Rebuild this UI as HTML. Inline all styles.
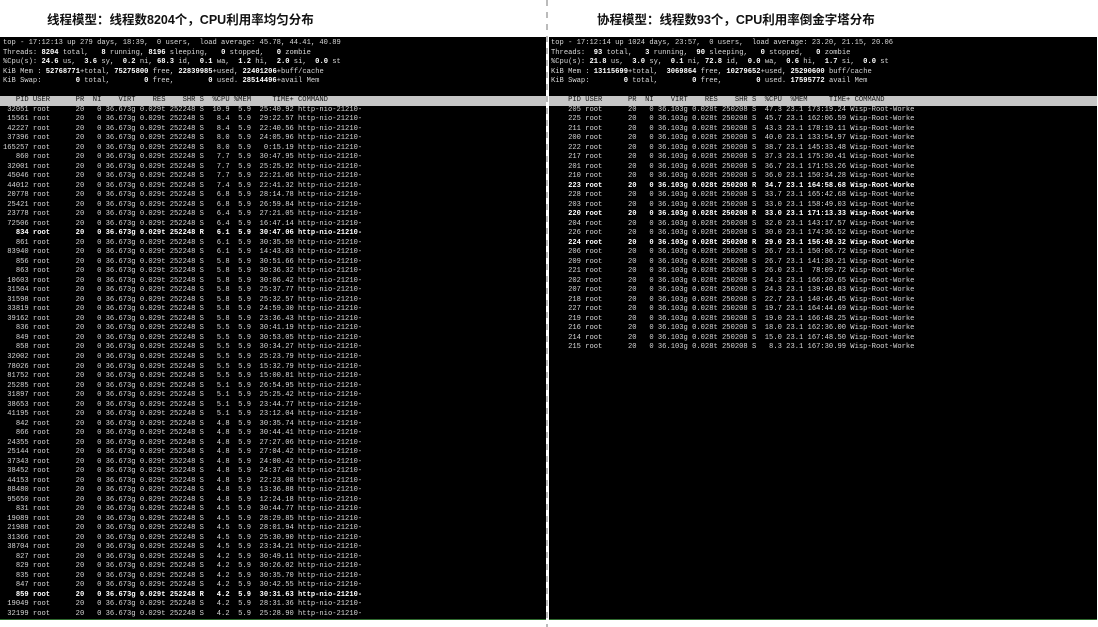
<!DOCTYPE html>
<html><head><meta charset="utf-8"><style>
html,body{margin:0;padding:0;background:#fff;width:1098px;height:627px;overflow:hidden;position:relative}
.t{position:absolute;top:9px;font:bold 12.5px "Liberation Sans","Noto Sans CJK SC",sans-serif;color:#111;white-space:nowrap}
.p{position:absolute;top:37px;height:582px;background:#000;border-bottom:1px solid #2f6b2f}
pre{position:absolute;top:2px;margin:0;font-family:"Liberation Mono",monospace;font-size:7.13px;line-height:9.52px;color:#d8d8d8;white-space:pre}
b{color:#fff;font-weight:bold}
.h{display:block;height:9.5px;background:#c6c6c6;color:#111;margin-left:-3px;padding-left:3px;width:560px}
.dash{position:absolute;left:546px;top:0;width:2px;height:627px;background:repeating-linear-gradient(#bbb 0 6px,transparent 6px 12px)}
</style></head><body>
<div class="t" style="left:47px">线程模型：线程数8204个，CPU利用率均匀分布</div>
<div class="t" style="left:597px">协程模型：线程数93个，CPU利用率倒金字塔分布</div>
<div class="p" style="left:0;width:546px;overflow:hidden"><pre style="left:3px">top - 17:12:13 up 279 days, 18:39,  0 users,  load average: 45.78, 44.41, 40.89
Threads: <b>8204</b> total,   <b>8</b> running, <b>8196</b> sleeping,   <b>0</b> stopped,   <b>0</b> zombie
%Cpu(s): <b>24.6</b> us,  <b>3.6</b> sy,  <b>0.2</b> ni, <b>68.3</b> id,  <b>0.1</b> wa,  <b>1.2</b> hi,  <b>2.0</b> si,  <b>0.0</b> st
KiB Mem : <b>52768771</b>+total, <b>75275800</b> free, <b>22839985</b>+used, <b>22401206</b>+buff/cache
KiB Swap:        <b>0</b> total,        <b>0</b> free,        <b>0</b> used. <b>28514496</b>+avail Mem

<span class="h">   PID USER      PR  NI    VIRT    RES    SHR S  %CPU %MEM     TIME+ COMMAND</span> 32051 root      20   0 36.673g 0.029t 252248 S  10.9  5.9  25:40.92 http-nio-21210-
 15561 root      20   0 36.673g 0.029t 252248 S   8.4  5.9  29:22.57 http-nio-21210-
 42227 root      20   0 36.673g 0.029t 252248 S   8.4  5.9  22:40.56 http-nio-21210-
 37396 root      20   0 36.673g 0.029t 252248 S   8.0  5.9  24:05.96 http-nio-21210-
165257 root      20   0 36.673g 0.029t 252248 S   8.0  5.9   0:15.19 http-nio-21210-
   860 root      20   0 36.673g 0.029t 252248 S   7.7  5.9  30:47.95 http-nio-21210-
 32001 root      20   0 36.673g 0.029t 252248 S   7.7  5.9  25:25.92 http-nio-21210-
 45046 root      20   0 36.673g 0.029t 252248 S   7.7  5.9  22:21.06 http-nio-21210-
 44012 root      20   0 36.673g 0.029t 252248 S   7.4  5.9  22:41.32 http-nio-21210-
 20778 root      20   0 36.673g 0.029t 252248 S   6.8  5.9  28:14.78 http-nio-21210-
 25421 root      20   0 36.673g 0.029t 252248 S   6.8  5.9  26:59.84 http-nio-21210-
 23778 root      20   0 36.673g 0.029t 252248 S   6.4  5.9  27:21.05 http-nio-21210-
 72506 root      20   0 36.673g 0.029t 252248 S   6.4  5.9  16:47.14 http-nio-21210-
<b>   834 root      20   0 36.673g 0.029t 252248 R   6.1  5.9  30:47.06 http-nio-21210-</b>
   861 root      20   0 36.673g 0.029t 252248 S   6.1  5.9  30:35.50 http-nio-21210-
 83940 root      20   0 36.673g 0.029t 252248 S   6.1  5.9  14:43.03 http-nio-21210-
   856 root      20   0 36.673g 0.029t 252248 S   5.8  5.9  30:51.66 http-nio-21210-
   863 root      20   0 36.673g 0.029t 252248 S   5.8  5.9  30:36.32 http-nio-21210-
 10603 root      20   0 36.673g 0.029t 252248 S   5.8  5.9  30:06.42 http-nio-21210-
 31504 root      20   0 36.673g 0.029t 252248 S   5.8  5.9  25:37.77 http-nio-21210-
 31598 root      20   0 36.673g 0.029t 252248 S   5.8  5.9  25:32.57 http-nio-21210-
 33819 root      20   0 36.673g 0.029t 252248 S   5.8  5.9  24:59.30 http-nio-21210-
 39162 root      20   0 36.673g 0.029t 252248 S   5.8  5.9  23:36.43 http-nio-21210-
   836 root      20   0 36.673g 0.029t 252248 S   5.5  5.9  30:41.19 http-nio-21210-
   849 root      20   0 36.673g 0.029t 252248 S   5.5  5.9  30:53.05 http-nio-21210-
   858 root      20   0 36.673g 0.029t 252248 S   5.5  5.9  30:34.27 http-nio-21210-
 32002 root      20   0 36.673g 0.029t 252248 S   5.5  5.9  25:23.79 http-nio-21210-
 78026 root      20   0 36.673g 0.029t 252248 S   5.5  5.9  15:32.79 http-nio-21210-
 81752 root      20   0 36.673g 0.029t 252248 S   5.5  5.9  15:00.81 http-nio-21210-
 25285 root      20   0 36.673g 0.029t 252248 S   5.1  5.9  26:54.95 http-nio-21210-
 31897 root      20   0 36.673g 0.029t 252248 S   5.1  5.9  25:25.42 http-nio-21210-
 38653 root      20   0 36.673g 0.029t 252248 S   5.1  5.9  23:44.77 http-nio-21210-
 41195 root      20   0 36.673g 0.029t 252248 S   5.1  5.9  23:12.04 http-nio-21210-
   842 root      20   0 36.673g 0.029t 252248 S   4.8  5.9  30:35.74 http-nio-21210-
   866 root      20   0 36.673g 0.029t 252248 S   4.8  5.9  30:44.41 http-nio-21210-
 24355 root      20   0 36.673g 0.029t 252248 S   4.8  5.9  27:27.06 http-nio-21210-
 25144 root      20   0 36.673g 0.029t 252248 S   4.8  5.9  27:04.42 http-nio-21210-
 37343 root      20   0 36.673g 0.029t 252248 S   4.8  5.9  24:00.42 http-nio-21210-
 38452 root      20   0 36.673g 0.029t 252248 S   4.8  5.9  24:37.43 http-nio-21210-
 44153 root      20   0 36.673g 0.029t 252248 S   4.8  5.9  22:23.08 http-nio-21210-
 88480 root      20   0 36.673g 0.029t 252248 S   4.8  5.9  13:36.88 http-nio-21210-
 95650 root      20   0 36.673g 0.029t 252248 S   4.8  5.9  12:24.18 http-nio-21210-
   831 root      20   0 36.673g 0.029t 252248 S   4.5  5.9  30:44.77 http-nio-21210-
 19089 root      20   0 36.673g 0.029t 252248 S   4.5  5.9  28:29.85 http-nio-21210-
 21988 root      20   0 36.673g 0.029t 252248 S   4.5  5.9  28:01.94 http-nio-21210-
 31366 root      20   0 36.673g 0.029t 252248 S   4.5  5.9  25:30.90 http-nio-21210-
 38704 root      20   0 36.673g 0.029t 252248 S   4.5  5.9  23:34.21 http-nio-21210-
   827 root      20   0 36.673g 0.029t 252248 S   4.2  5.9  30:49.11 http-nio-21210-
   829 root      20   0 36.673g 0.029t 252248 S   4.2  5.9  30:26.02 http-nio-21210-
   835 root      20   0 36.673g 0.029t 252248 S   4.2  5.9  30:35.70 http-nio-21210-
   847 root      20   0 36.673g 0.029t 252248 S   4.2  5.9  30:42.55 http-nio-21210-
<b>   859 root      20   0 36.673g 0.029t 252248 R   4.2  5.9  30:31.63 http-nio-21210-</b>
 19049 root      20   0 36.673g 0.029t 252248 S   4.2  5.9  28:31.36 http-nio-21210-
 32199 root      20   0 36.673g 0.029t 252248 S   4.2  5.9  25:28.90 http-nio-21210-</pre></div>
<div class="dash"></div>
<div class="p" style="left:549px;width:548px;overflow:hidden"><pre style="left:2px">top - 17:12:14 up 1024 days, 23:57,  0 users,  load average: 23.20, 21.15, 20.06
Threads:  <b>93</b> total,   <b>3</b> running,  <b>90</b> sleeping,   <b>0</b> stopped,   <b>0</b> zombie
%Cpu(s): <b>21.8</b> us,  <b>3.0</b> sy,  <b>0.1</b> ni, <b>72.8</b> id,  <b>0.0</b> wa,  <b>0.6</b> hi,  <b>1.7</b> si,  <b>0.0</b> st
KiB Mem : <b>13115699</b>+total,  <b>3069864</b> free, <b>10279652</b>+used, <b>25290600</b> buff/cache
KiB Swap:        <b>0</b> total,        <b>0</b> free,        <b>0</b> used. <b>17595772</b> avail Mem

<span class="h">    PID USER      PR  NI    VIRT    RES    SHR S  %CPU  %MEM     TIME+ COMMAND</span>    205 root      20   0 36.103g 0.028t 250208 S  47.3 23.1 173:19.24 Wisp-Root-Worke
    225 root      20   0 36.103g 0.028t 250208 S  45.7 23.1 162:06.59 Wisp-Root-Worke
    211 root      20   0 36.103g 0.028t 250208 S  43.3 23.1 178:19.11 Wisp-Root-Worke
    200 root      20   0 36.103g 0.028t 250208 S  40.0 23.1 133:54.97 Wisp-Root-Worke
    222 root      20   0 36.103g 0.028t 250208 S  38.7 23.1 145:33.48 Wisp-Root-Worke
    217 root      20   0 36.103g 0.028t 250208 S  37.3 23.1 175:30.41 Wisp-Root-Worke
    201 root      20   0 36.103g 0.028t 250208 S  36.7 23.1 171:53.26 Wisp-Root-Worke
    210 root      20   0 36.103g 0.028t 250208 S  36.0 23.1 150:34.28 Wisp-Root-Worke
<b>    223 root      20   0 36.103g 0.028t 250208 R  34.7 23.1 164:58.68 Wisp-Root-Worke</b>
    228 root      20   0 36.103g 0.028t 250208 S  33.7 23.1 165:42.68 Wisp-Root-Worke
    203 root      20   0 36.103g 0.028t 250208 S  33.0 23.1 158:49.03 Wisp-Root-Worke
<b>    220 root      20   0 36.103g 0.028t 250208 R  33.0 23.1 171:13.33 Wisp-Root-Worke</b>
    204 root      20   0 36.103g 0.028t 250208 S  32.0 23.1 143:17.57 Wisp-Root-Worke
    226 root      20   0 36.103g 0.028t 250208 S  30.0 23.1 174:36.52 Wisp-Root-Worke
<b>    224 root      20   0 36.103g 0.028t 250208 R  29.0 23.1 156:49.32 Wisp-Root-Worke</b>
    206 root      20   0 36.103g 0.028t 250208 S  26.7 23.1 150:06.72 Wisp-Root-Worke
    209 root      20   0 36.103g 0.028t 250208 S  26.7 23.1 141:30.21 Wisp-Root-Worke
    221 root      20   0 36.103g 0.028t 250208 S  26.0 23.1  78:09.72 Wisp-Root-Worke
    202 root      20   0 36.103g 0.028t 250208 S  24.3 23.1 166:20.65 Wisp-Root-Worke
    207 root      20   0 36.103g 0.028t 250208 S  24.3 23.1 139:40.83 Wisp-Root-Worke
    218 root      20   0 36.103g 0.028t 250208 S  22.7 23.1 140:46.45 Wisp-Root-Worke
    227 root      20   0 36.103g 0.028t 250208 S  19.7 23.1 164:44.69 Wisp-Root-Worke
    219 root      20   0 36.103g 0.028t 250208 S  19.0 23.1 166:48.25 Wisp-Root-Worke
    216 root      20   0 36.103g 0.028t 250208 S  18.0 23.1 162:36.00 Wisp-Root-Worke
    214 root      20   0 36.103g 0.028t 250208 S  15.0 23.1 167:48.50 Wisp-Root-Worke
    215 root      20   0 36.103g 0.028t 250208 S   8.3 23.1 167:30.99 Wisp-Root-Worke</pre></div>
</body></html>
